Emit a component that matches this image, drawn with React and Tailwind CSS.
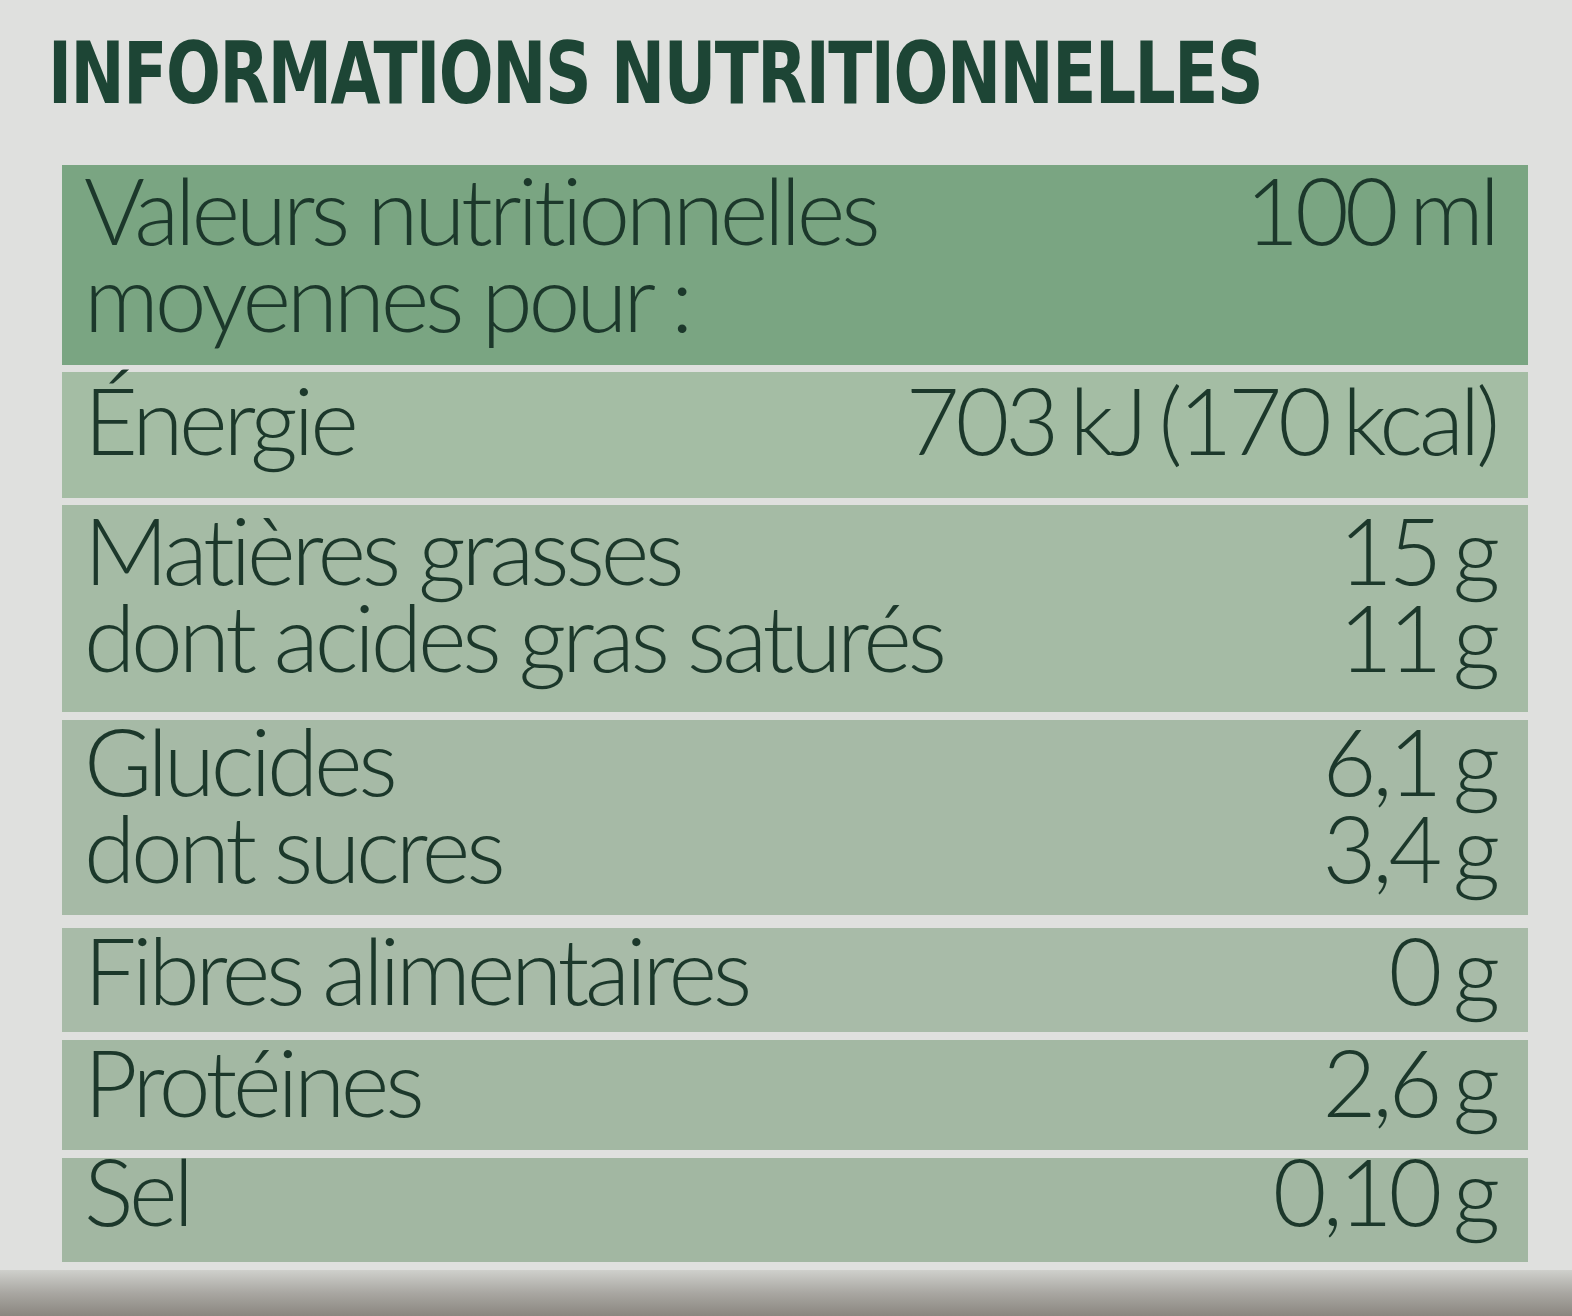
const rows = [
  {
    box: 'mt-0 h-[200px] bg-[#7aa582]',
    inner: 'mt-[1px]',
    lines: [
      ['Valeurs nutritionnelles', '100 ml'],
      ['moyennes pour :', ''],
    ],
  },
  {
    box: 'mt-[7px] h-[126px] bg-[#a4bda4]',
    inner: 'mt-[4px]',
    lines: [['Énergie', '703 kJ (170 kcal)']],
  },
  {
    box: 'mt-[7px] h-[207px] bg-[#a5bba5]',
    inner: 'mt-[1px]',
    lines: [
      ['Matières grasses', '15 g'],
      ['dont acides gras saturés', '11 g'],
    ],
  },
  {
    box: 'mt-[8px] h-[195px] bg-[#a6baa6]',
    inner: '-mt-[3px]',
    lines: [
      ['Glucides', '6,1 g'],
      ['dont sucres', '3,4 g'],
    ],
  },
  {
    box: 'mt-[13px] h-[104px] bg-[#a8bba8]',
    inner: '-mt-[2px]',
    lines: [['Fibres alimentaires', '0 g']],
  },
  {
    box: 'mt-[8px] h-[110px] bg-[#a3b8a3]',
    inner: '-mt-[2px]',
    lines: [['Protéines', '2,6 g']],
  },
  {
    box: 'mt-[8px] h-[104px] bg-[#a2b7a2]',
    inner: '-mt-[11px]',
    lines: [['Sel', '0,10 g']],
  },
];

const Row = ({ box, inner, lines }) => (
  <div className={`${box} pl-[22px] pr-[32px]`}>
    <div className={inner}>
      {lines.map(([left, right], i) => (
        <div key={i} className="flex justify-between leading-[87px] h-[87px] whitespace-nowrap">
          <span>{left}</span>
          <span className="[word-spacing:-0.07em]">{right}</span>
        </div>
      ))}
    </div>
  </div>
);

export default function App() {
  return (
    <div className="w-[1572px] h-[1316px] bg-[#dfe0de] flex flex-col overflow-hidden">
      <div className="h-[165px] pl-[48px] pt-[23px]">
        <h1
          className="inline-block origin-left scale-x-[0.835] text-[86px] leading-[100px] font-bold tracking-[-0.02em] text-[#1d4535] whitespace-nowrap"
          style={{ fontFamily: '"DejaVu Sans Condensed", "DejaVu Sans", sans-serif' }}
        >
          INFORMATIONS NUTRITIONNELLES
        </h1>
      </div>
      <div
        className="ml-[62px] w-[1466px] flex flex-col text-[93px] font-light tracking-[-0.045em] text-[#1c382b]"
        style={{ fontFamily: 'Lato, "Noto Sans", sans-serif' }}
      >
        {rows.map((r, i) => (
          <Row key={i} {...r} />
        ))}
      </div>
      <div className="mt-[8px] flex-1 bg-gradient-to-b from-[#cfd0cc] via-[#a9a7a2] to-[#8a867f]" />
    </div>
  );
}
